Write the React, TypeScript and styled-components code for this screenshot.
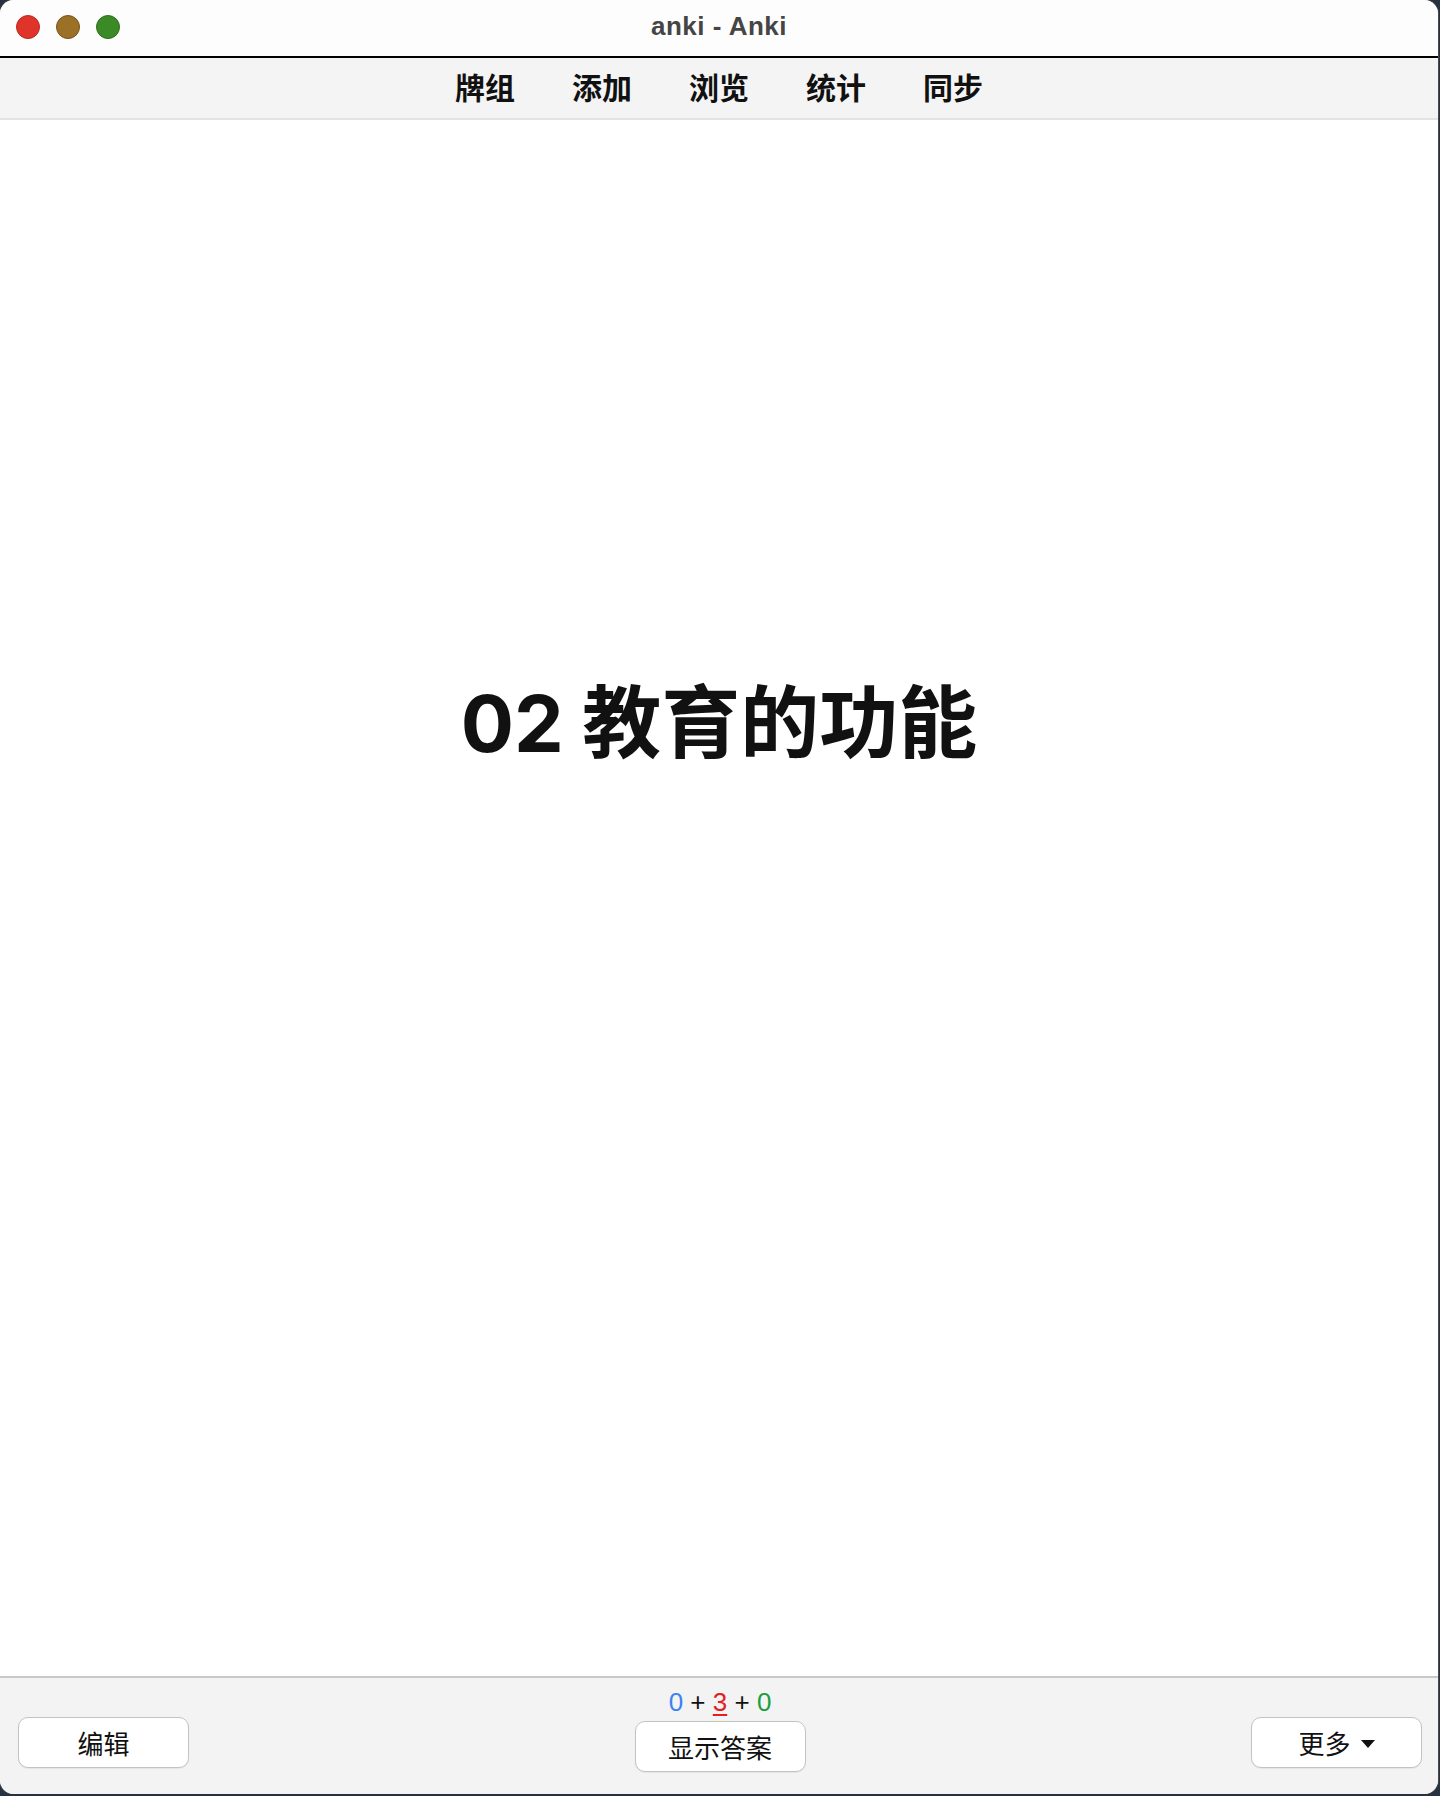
import React from "react";
import styled, { createGlobalStyle } from "styled-components";

const GlobalStyle = createGlobalStyle`
  html, body {
    margin: 0;
    padding: 0;
    background: #26323f;
  }
  body {
    font-family: "Liberation Sans", "Noto Sans CJK SC", sans-serif;
  }
  * {
    box-sizing: border-box;
  }
`;

const CJK = `"Liberation Sans", "Noto Sans CJK SC", sans-serif`;

const Window = styled.div`
  width: 1438px;
  height: 1794px;
  display: flex;
  flex-direction: column;
  border-radius: 14px;
  overflow: hidden;
  background: #ffffff;
  box-shadow: 0 0 0 1px #4a4a4a;
`;

const TitleBar = styled.header`
  height: 58px;
  display: grid;
  grid-template-columns: 1fr auto 1fr;
  align-items: center;
  padding: 0 16px;
  background: #fdfdfd;
  border-bottom: 2px solid #000;
`;

const Lights = styled.div`
  display: flex;
  gap: 16px;
  margin-top: -2px;
`;

const Light = styled.span<{ $fill: string; $edge: string }>`
  width: 24px;
  height: 24px;
  border-radius: 50%;
  background: ${(p) => p.$fill};
  border: 1px solid ${(p) => p.$edge};
`;

const WindowTitle = styled.h1`
  margin: -3px 0 0;
  font-family: ${CJK};
  font-size: 26px;
  font-weight: 700;
  color: #454545;
  letter-spacing: 0.5px;
`;

const Toolbar = styled.nav`
  height: 62px;
  display: flex;
  justify-content: center;
  align-items: center;
  gap: 57px;
  background: #f4f4f4;
  border-bottom: 2px solid #e3e3e3;
`;

const NavLink = styled.a`
  font-family: ${CJK};
  font-size: 30px;
  font-weight: 700;
  color: #111;
  text-decoration: none;
  line-height: 1;
  margin-top: 2px;
`;

const Card = styled.main`
  flex: 1;
  display: flex;
  justify-content: center;
  align-items: center;
  padding-bottom: 350px;
  background: #fff;
`;

const Question = styled.h2`
  margin: 0;
  font-family: Inter, "Noto Sans CJK SC", sans-serif;
  font-size: 79px;
  font-weight: 700;
  line-height: 1.2;
  color: #111;
`;

const BottomBar = styled.footer`
  height: 118px;
  display: grid;
  grid-template-columns: 1fr auto 1fr;
  align-items: end;
  padding: 10px 16px 22px 18px;
  background: #f3f3f3;
  border-top: 2px solid #c9c9c9;
`;

const Center = styled.div`
  display: flex;
  flex-direction: column;
  align-items: center;
  gap: 5px;
`;

const Counts = styled.div`
  font-family: ${CJK};
  font-size: 26px;
  line-height: 28px;
  color: #111;
  white-space: pre;
`;

const Count = styled.span<{ $color: string; $current?: boolean }>`
  color: ${(p) => p.$color};
  text-decoration: ${(p) => (p.$current ? "underline" : "none")};
  text-underline-offset: 3px;
  text-decoration-thickness: 2px;
`;

const Button = styled.button<{ $side?: "left" | "right" }>`
  width: 171px;
  height: 51px;
  display: flex;
  align-items: center;
  justify-content: center;
  gap: 10px;
  margin-bottom: ${(p) => (p.$side ? "4px" : "0")};
  justify-self: ${(p) => (p.$side === "right" ? "end" : p.$side === "left" ? "start" : "center")};
  background: #fff;
  border: 1.5px solid #c3c3c3;
  border-radius: 10px;
  box-shadow: 0 1px 1px rgba(0, 0, 0, 0.06);
  font-family: ${CJK};
  font-size: 26px;
  color: #111;
  padding: 0;
  cursor: pointer;
`;

const Caret = styled.span`
  width: 0;
  height: 0;
  margin-top: 3px;
  border-left: 7px solid transparent;
  border-right: 7px solid transparent;
  border-top: 8px solid #111;
`;

const links = ["牌组", "添加", "浏览", "统计", "同步"];

export default function App() {
  return (
    <>
      <GlobalStyle />
      <Window>
        <TitleBar>
          <Lights>
            <Light $fill="#e0332a" $edge="#b82a22" />
            <Light $fill="#9a7126" $edge="#785319" />
            <Light $fill="#3b8a26" $edge="#2e6e1e" />
          </Lights>
          <WindowTitle>anki - Anki</WindowTitle>
          <span />
        </TitleBar>
        <Toolbar>
          {links.map((l) => (
            <NavLink key={l} href="#">
              {l}
            </NavLink>
          ))}
        </Toolbar>
        <Card>
          <Question>02 教育的功能</Question>
        </Card>
        <BottomBar>
          <Button $side="left">编辑</Button>
          <Center>
            <Counts>
              <Count $color="#3d82f2">0</Count>
              {" + "}
              <Count $color="#e0211f" $current>
                3
              </Count>
              {" + "}
              <Count $color="#1b9e42">0</Count>
            </Counts>
            <Button>显示答案</Button>
          </Center>
          <Button $side="right">
            更多
            <Caret />
          </Button>
        </BottomBar>
      </Window>
    </>
  );
}
